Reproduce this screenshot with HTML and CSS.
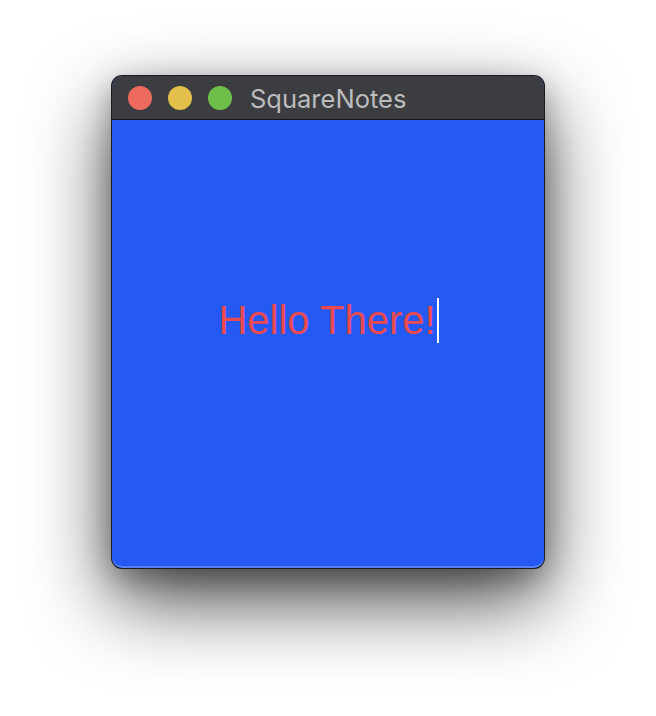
FILE: index.html
```html
<!DOCTYPE html>
<html>
<head>
<meta charset="utf-8">
<link rel="stylesheet" href="styles.css">
</head>
<body>
<div class="stage">
  <div class="window">
    <div class="titlebar">
      <div class="lights">
        <span class="light red"></span>
        <span class="light yellow"></span>
        <span class="light green"></span>
      </div>
      <span class="title">SquareNotes</span>
    </div>
    <div class="content">
      <div class="note">Hello There!<span class="caret"></span></div>
    </div>
  </div>
</div>
</body>
</html>
```

FILE: styles.css
```css
html, body {
  margin: 0;
  padding: 0;
  background: #ffffff;
}
.stage {
  width: 656px;
  height: 716px;
  padding: 76px 0 0 112px;
  box-sizing: border-box;
}
.window {
  width: 432px;
  height: 492px;
  border-radius: 10px;
  overflow: hidden;
  background: #2559f4;
  box-shadow: 0 0 0 1px #1b1b1d, 0 32px 80px rgba(0,0,0,0.72), 0 10px 30px rgba(0,0,0,0.3);
  display: flex;
  flex-direction: column;
}
.titlebar {
  height: 43px;
  background: #3c3d40;
  border-bottom: 1px solid #151517;
  display: flex;
  align-items: center;
  padding-left: 16px;
  font-family: "Inter", "Liberation Sans", sans-serif;
}
.lights {
  display: flex;
  gap: 16px;
}
.light {
  width: 24px;
  height: 24px;
  border-radius: 50%;
  display: block;
}
.red { background: #ed6a5e; }
.yellow { background: #e2bf4b; }
.green { background: #6ebf4a; }
.title {
  margin-left: 18px;
  color: #bcbcbe;
  font-size: 25.5px;
  margin-top: 1px;
}
.content {
  flex: 1;
  display: flex;
  justify-content: center;
  align-items: center;
  padding-bottom: 48px;
  border-radius: 0 0 10px 10px;
  box-shadow: inset 0 -2px 0 #5b7ef5;
}
.note {
  font-family: "Liberation Sans", Arial, sans-serif;
  font-size: 40px;
  color: #ea4a4f;
  display: flex;
  align-items: center;
  margin-left: 1px;
}
.caret {
  display: block;
  width: 2px;
  height: 45px;
  background: #ffffff;
  margin-left: 1px;
}
```
